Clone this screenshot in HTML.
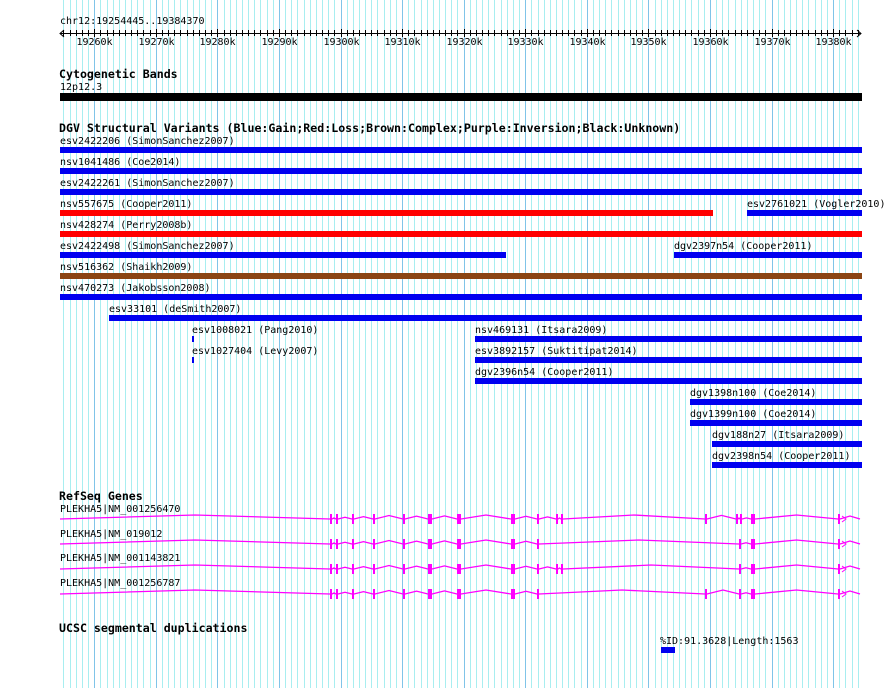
<!DOCTYPE html>
<html><head><meta charset="utf-8"><style>
html,body{margin:0;padding:0;background:#fff;width:890px;height:688px;overflow:hidden}
svg{display:block}
text{font-family:"DejaVu Sans Mono","Liberation Mono",monospace;font-size:10px;fill:#000}
.h{font-weight:bold;font-size:11.6px}
</style></head><body>
<svg id="s" width="890" height="688" xmlns="http://www.w3.org/2000/svg">
<g id="grid"></g>
<g id="ruler" stroke="#000" stroke-width="1"></g>
<text x="60" y="24">chr12:19254445..19384370</text>
<g id="rl"></g>
<text class="h" x="59" y="78">Cytogenetic Bands</text>
<text x="60" y="90">12p12.3</text>
<rect x="60" y="93" width="802" height="8" fill="#000"/>
<text class="h" x="59" y="132">DGV Structural Variants (Blue:Gain;Red:Loss;Brown:Complex;Purple:Inversion;Black:Unknown)</text>
<g fill="#0000f0">
<rect x="60" y="147" width="802" height="6"/>
<rect x="60" y="168" width="802" height="6"/>
<rect x="60" y="189" width="802" height="6"/>
<rect x="747" y="210" width="115" height="6"/>
<rect x="60" y="252" width="446" height="6"/>
<rect x="674" y="252" width="188" height="6"/>
<rect x="60" y="294" width="802" height="6"/>
<rect x="109" y="315" width="753" height="6"/>
<rect x="192" y="336" width="2" height="6"/>
<rect x="475" y="336" width="387" height="6"/>
<rect x="192" y="357" width="2" height="6"/>
<rect x="475" y="357" width="387" height="6"/>
<rect x="475" y="378" width="387" height="6"/>
<rect x="690" y="399" width="172" height="6"/>
<rect x="690" y="420" width="172" height="6"/>
<rect x="712" y="441" width="150" height="6"/>
<rect x="712" y="462" width="150" height="6"/>
<rect x="661" y="647" width="14" height="6"/>
</g>
<rect x="60" y="210" width="653" height="6" fill="#ff0000"/>
<rect x="60" y="231" width="802" height="6" fill="#ff0000"/>
<rect x="60" y="273" width="802" height="6" fill="#8b4513"/>
<text x="60" y="144">esv2422206 (SimonSanchez2007)</text>
<text x="60" y="165">nsv1041486 (Coe2014)</text>
<text x="60" y="186">esv2422261 (SimonSanchez2007)</text>
<text x="60" y="207">nsv557675 (Cooper2011)</text>
<text x="747" y="207">esv2761021 (Vogler2010)</text>
<text x="60" y="228">nsv428274 (Perry2008b)</text>
<text x="60" y="249">esv2422498 (SimonSanchez2007)</text>
<text x="674" y="249">dgv2397n54 (Cooper2011)</text>
<text x="60" y="270">nsv516362 (Shaikh2009)</text>
<text x="60" y="291">nsv470273 (Jakobsson2008)</text>
<text x="109" y="312">esv33101 (deSmith2007)</text>
<text x="192" y="333">esv1008021 (Pang2010)</text>
<text x="475" y="333">nsv469131 (Itsara2009)</text>
<text x="192" y="354">esv1027404 (Levy2007)</text>
<text x="475" y="354">esv3892157 (Suktitipat2014)</text>
<text x="475" y="375">dgv2396n54 (Cooper2011)</text>
<text x="690" y="396">dgv1398n100 (Coe2014)</text>
<text x="690" y="417">dgv1399n100 (Coe2014)</text>
<text x="712" y="438">dgv188n27 (Itsara2009)</text>
<text x="712" y="459">dgv2398n54 (Cooper2011)</text>
<text class="h" x="59" y="500">RefSeq Genes</text>
<text x="60" y="512">PLEKHA5|NM_001256470</text>
<text x="60" y="537">PLEKHA5|NM_019012</text>
<text x="60" y="561">PLEKHA5|NM_001143821</text>
<text x="60" y="586">PLEKHA5|NM_001256787</text>
<g id="genes"></g>
<text class="h" x="59" y="632">UCSC segmental duplications</text>
<text x="660" y="644">%ID:91.3628|Length:1563</text>
</svg>
<script>
var NS="http://www.w3.org/2000/svg";
function el(p,n,a){var e=document.createElementNS(NS,n);for(var k in a)e.setAttribute(k,a[k]);p.appendChild(e);return e;}
var g=document.getElementById('grid'),r=document.getElementById('ruler'),rl=document.getElementById('rl');
var s=800/129925;
for(var b=19255000;b<=19384370;b+=1000){
 var x=Math.round(60+(b-19254445)*s)+0.5;
 var maj=(b%10000==0);
 el(g,'line',{x1:x,x2:x,y1:0,y2:688,stroke:maj?'#80c4e8':'#a8eef0','stroke-width':1});
 el(r,'line',{x1:x,x2:x,y1:maj?29:30,y2:maj?37:36});
 if(maj){var t=el(rl,'text',{x:x,y:45,'text-anchor':'middle'});t.textContent=(b/1000)+'k';}
}
el(r,'line',{x1:60,x2:861,y1:33.5,y2:33.5});
el(r,'polyline',{points:'64,30 60,33.5 64,37',fill:'none'});
el(r,'polyline',{points:'857,30 861,33.5 857,37',fill:'none'});
var G=document.getElementById('genes');
var rows=[
 {y:519,ex:[[330,2],[336,2],[352,2],[373,2],[403,2],[428,4],[457,4],[511,4],[537,2],[556,2],[561,2],[705,2],[736,2],[740,2],[751,4],[838,2]]},
 {y:544,ex:[[330,2],[336,2],[352,2],[373,2],[403,2],[428,4],[457,4],[511,4],[537,2],[739,2],[751,4],[838,2]]},
 {y:569,ex:[[330,2],[336,2],[352,2],[373,2],[403,2],[428,4],[457,4],[511,4],[537,2],[556,2],[561,2],[739,2],[751,4],[838,2]]},
 {y:594,ex:[[330,2],[336,2],[352,2],[373,2],[403,2],[428,4],[457,4],[511,4],[537,2],[705,2],[739,2],[751,4],[838,2]]}
];
rows.forEach(function(R){
 var pts=[[60,R.y]],prev=60;
 R.ex.forEach(function(e){var a=prev,b=e[0];var h=Math.min(4,Math.max(1,(b-a)/8));
  pts.push([(a+b)/2,R.y-h]);pts.push([b,R.y]);prev=e[0]+e[1];pts.push([prev,R.y]);});
 pts.push([(prev+860)/2,R.y-3]);pts.push([860,R.y]);
 el(G,'polyline',{points:pts.map(function(p){return p.join(',')}).join(' '),fill:'none',stroke:'#ff00ff','stroke-width':1.3});
 R.ex.forEach(function(e){el(G,'rect',{x:e[0],y:R.y-5,width:e[1],height:10,fill:'#ff00ff'});});
 el(G,'polyline',{points:(842)+','+(R.y-3)+' 846,'+R.y+' 842,'+(R.y+3),fill:'none',stroke:'#ff00ff','stroke-width':1});
});
</script>
</body></html>
